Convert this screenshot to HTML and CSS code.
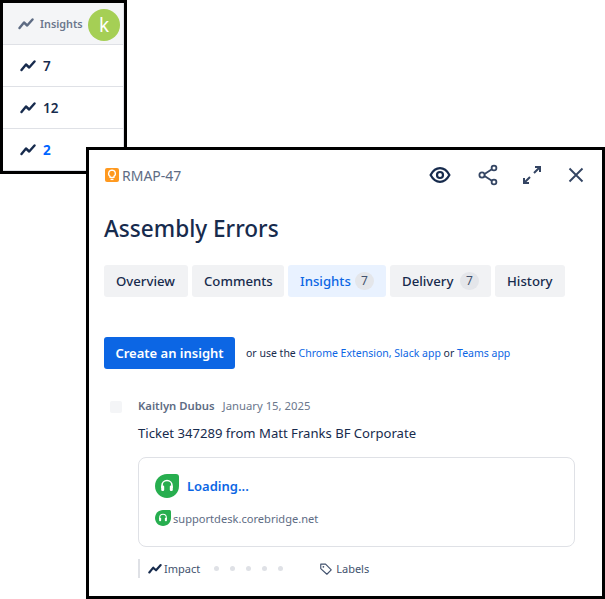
FILE: index.html
```html
<!DOCTYPE html>
<html lang="en">

<head>
    <meta charset="UTF-8">
    <title>Assembly Errors</title>
    <link rel="stylesheet" href="styles.css">
</head>

<body>
    <svg class="defs" width="0" height="0">
        <symbol id="trend" viewBox="0 0 16 16">
            <path d="M1.5 12 L6 6.5 L9.2 9.5 L14.5 3.5" fill="none" stroke="currentColor" stroke-width="2.4" stroke-linecap="round" stroke-linejoin="round" />
        </symbol>
        <symbol id="headset" viewBox="0 0 24 24">
            <path d="M0 12 C0 5.4 5.4 0 12 0 L21 0 C23 0 24 1 24 3 L24 12 C24 18.6 18.6 24 12 24 C5.4 24 0 18.6 0 12 Z" fill="#27ae4f" />
            <path d="M7 14 L7 11.5 C7 8.7 9.2 6.5 12 6.5 C14.8 6.5 17 8.7 17 11.5 L17 14" fill="none" stroke="#fff" stroke-width="1.6" />
            <rect x="6.2" y="11.5" width="3" height="5.5" rx="1.2" fill="#fff" />
            <rect x="14.8" y="11.5" width="3" height="5.5" rx="1.2" fill="#fff" />
        </symbol>
    </svg>

    <div class="column-box">
        <div class="column-head">
            <svg class="trend"><use href="#trend" /></svg>
            <span>Insights</span>
            <div class="avatar">k</div>
        </div>
        <div class="column-row"><svg class="trend"><use href="#trend" /></svg><span>7</span></div>
        <div class="column-row"><svg class="trend"><use href="#trend" /></svg><span>12</span></div>
        <div class="column-row"><svg class="trend"><use href="#trend" /></svg><span class="blue">2</span></div>
    </div>

    <div class="dialog">
        <div class="top-bar">
            <div class="issue-key">
                <span class="bulb">
                    <svg viewBox="0 0 16 16" width="14" height="14">
                        <path d="M8 2.5 A3.9 3.9 0 0 1 10.2 9.6 L10.2 10.8 L5.8 10.8 L5.8 9.6 A3.9 3.9 0 0 1 8 2.5 Z" fill="none" stroke="#fff" stroke-width="1.5" />
                        <path d="M6.3 13 L9.7 13" stroke="#fff" stroke-width="1.6" />
                    </svg>
                </span>
                RMAP-47
            </div>
            <div class="actions">
                <svg class="eye" viewBox="0 0 24 24" width="24" height="24">
                    <path d="M2.6 12 C5 7.6 8.3 5.2 12 5.2 C15.7 5.2 19 7.6 21.4 12 C19 16.4 15.7 18.8 12 18.8 C8.3 18.8 5 16.4 2.6 12 Z" fill="none" stroke="#172b4d" stroke-width="2.2" />
                    <circle cx="12" cy="12" r="3" fill="none" stroke="#172b4d" stroke-width="2.2" />
                </svg>
                <svg viewBox="0 0 24 24" width="24" height="24">
                    <path d="M7 12 L17 5.5 M7 12 L17 18.5" stroke="#344563" stroke-width="1.8" />
                    <circle cx="6" cy="12" r="2.6" fill="#fff" stroke="#344563" stroke-width="1.8" />
                    <circle cx="18" cy="5" r="2.4" fill="#fff" stroke="#344563" stroke-width="1.8" />
                    <circle cx="18" cy="19" r="2.4" fill="#fff" stroke="#344563" stroke-width="1.8" />
                </svg>
                <svg viewBox="0 0 24 24" width="24" height="24">
                    <path d="M14 10 L19.5 4.5 M15 4 L20 4 L20 9 M10 14 L4.5 19.5 M4 15 L4 20 L9 20" fill="none" stroke="#344563" stroke-width="2" />
                </svg>
                <svg viewBox="0 0 24 24" width="24" height="24">
                    <path d="M5.5 5.5 L18.5 18.5 M18.5 5.5 L5.5 18.5" fill="none" stroke="#344563" stroke-width="1.9" />
                </svg>
            </div>
        </div>

        <h1>Assembly Errors</h1>

        <div class="tabs">
            <div class="tab">Overview</div>
            <div class="tab">Comments</div>
            <div class="tab active">Insights <span class="count">7</span></div>
            <div class="tab">Delivery <span class="count">7</span></div>
            <div class="tab">History</div>
        </div>

        <div class="create-row">
            <button class="create">Create an insight</button>
            <span class="or-use">or use the <a>Chrome Extension, Slack app</a> or <a>Teams app</a></span>
        </div>

        <div class="insight">
            <div class="check"></div>
            <div class="insight-body">
                <div class="byline"><strong>Kaitlyn Dubus</strong><span>January 15, 2025</span></div>
                <p class="ticket">Ticket 347289 from Matt Franks BF Corporate</p>
                <div class="link-card">
                    <div class="link-title">
                        <svg width="24" height="24"><use href="#headset" /></svg>
                        <span>Loading...</span>
                    </div>
                    <div class="link-site">
                        <svg width="16" height="16"><use href="#headset" /></svg>
                        <span>supportdesk.corebridge.net</span>
                    </div>
                </div>
                <div class="card-foot">
                    <div class="impact">
                        <svg class="trend small"><use href="#trend" /></svg>
                        <span>Impact</span>
                    </div>
                    <div class="dots"><i></i><i></i><i></i><i></i><i></i></div>
                    <div class="labels">
                        <svg viewBox="0 0 16 16" width="14" height="14">
                            <path d="M2 2.5 L7.5 2.5 L14 9 L9 14 L2 7.5 Z" fill="none" stroke="#42526e" stroke-width="1.3" stroke-linejoin="round" />
                            <circle cx="5" cy="5.5" r="1" fill="#42526e" />
                        </svg>
                        <span>Labels</span>
                    </div>
                </div>
            </div>
        </div>
    </div>
</body>

</html>
```

FILE: styles.css
```css
body {
    margin: 0;
    height: 599px;
    overflow: hidden;
    position: relative;
    background-color: #fff;
    font-family: "Noto Sans", sans-serif;
    color: #172b4d;
}

.defs {
    position: absolute;
}

.column-box {
    width: 121px;
    border: 3px solid #000;
    display: flex;
    flex-direction: column;
}

.column-head,
.column-row {
    height: 41px;
    display: flex;
    align-items: center;
    padding-left: 17px;
    border-bottom: 1px solid #dfe1e6;
    border-right: 1px solid #dfe1e6;
}

.column-head {
    background-color: #f4f5f7;
    color: #6b778c;
    font-size: 10.8px;
    font-weight: 600;
    padding-left: 15px;
    position: relative;
}

.column-head .trend {
    color: #5e6c84;
    margin-right: 6px;
}

.trend {
    width: 16px;
    height: 16px;
    margin-right: 7px;
    color: #172b4d;
    flex-shrink: 0;
}

.column-row {
    font-size: 13.5px;
    font-weight: 600;
}

.blue {
    color: #0065ff;
    font-weight: 700;
}

.avatar {
    position: absolute;
    left: 85px;
    top: 6px;
    width: 32px;
    height: 32px;
    border-radius: 50%;
    background-color: #a5cf55;
    color: #fff;
    font-size: 19px;
    font-weight: 400;
    display: flex;
    align-items: center;
    justify-content: center;
}

.dialog {
    position: absolute;
    left: 86px;
    top: 147px;
    width: 498px;
    height: 446px;
    background-color: #fff;
    border: 3px solid #000;
    padding-left: 15px;
}

.top-bar {
    height: 24px;
    margin-top: 13px;
    display: flex;
    align-items: center;
    justify-content: space-between;
}

.issue-key {
    display: flex;
    align-items: center;
    gap: 3px;
    margin-left: 1px;
    font-size: 14px;
    color: #5e6c84;
}

.bulb {
    width: 14px;
    height: 14px;
    background-color: #ff991f;
    border-radius: 2px;
    display: flex;
}

.actions {
    display: flex;
    gap: 20px;
    padding-right: 14px;
}

.eye {
    margin-right: 4px;
}

h1 {
    margin: 26px 0 0;
    font-size: 22.6px;
    line-height: 32px;
    font-weight: 500;
    color: #172b4d;
}

.tabs {
    display: grid;
    grid-template-columns: 84px 92px 98px 101px 70px;
    gap: 4px;
    margin-top: 20px;
}

.tab {
    height: 32px;
    padding: 0 12px;
    background-color: #f1f2f4;
    border-radius: 3px;
    font-size: 13.2px;
    font-weight: 500;
    display: flex;
    align-items: center;
    justify-content: space-between;
}

.tab.active {
    background-color: #e9f2ff;
    color: #0c66e4;
}

.count {
    min-width: 19px;
    height: 18px;
    line-height: 18px;
    text-align: center;
    border-radius: 9px;
    background-color: #e4e6ea;
    color: #42526e;
    font-size: 12px;
    font-weight: 400;
}

.create-row {
    display: flex;
    align-items: center;
    margin-top: 40px;
}

.create {
    height: 32px;
    width: 131px;
    padding: 0;
    border: none;
    border-radius: 3px;
    background-color: #0c66e4;
    color: #fff;
    font-family: inherit;
    font-size: 13px;
    font-weight: 600;
}

.or-use {
    margin-left: 11px;
    font-size: 10.5px;
    color: #172b4d;
}

.or-use a {
    color: #0c66e4;
}

.insight {
    display: flex;
    margin-top: 28px;
}

.check {
    width: 12px;
    height: 12px;
    margin: 4px 0 0 6px;
    border-radius: 2px;
    background-color: #f4f5f7;
}

.insight-body {
    margin-left: 16px;
    width: 437px;
}

.byline {
    display: flex;
    gap: 8px;
    font-size: 11.3px;
    line-height: 18px;
    color: #6b778c;
}

.byline strong {
    font-weight: 600;
    color: #5e6c84;
}

.ticket {
    margin: 8px 0 0;
    font-size: 13.1px;
    line-height: 20px;
    color: #172b4d;
}

.link-card {
    margin-top: 14px;
    height: 90px;
    border: 1px solid #dfe1e6;
    border-radius: 8px;
    padding: 16px;
    box-sizing: border-box;
}

.link-title {
    display: flex;
    align-items: center;
    gap: 8px;
    color: #0c66e4;
    font-size: 13px;
    font-weight: 600;
}

.link-site {
    display: flex;
    align-items: center;
    gap: 2px;
    margin-top: 12px;
    font-size: 11.1px;
    color: #5e6c84;
}

.card-foot {
    display: flex;
    align-items: center;
    margin-top: 12px;
    font-size: 11px;
    color: #42526e;
}

.impact {
    display: flex;
    align-items: center;
    height: 19px;
    border-left: 2px solid #dfe1e6;
    padding-left: 8px;
}

.trend.small {
    width: 14px;
    height: 14px;
    margin-right: 2px;
}

.dots {
    display: flex;
    gap: 11px;
    margin-left: 14px;
}

.dots i {
    width: 5px;
    height: 5px;
    border-radius: 50%;
    background-color: #dfe1e6;
}

.labels {
    display: flex;
    align-items: center;
    gap: 3px;
    margin-left: 36px;
}
```
